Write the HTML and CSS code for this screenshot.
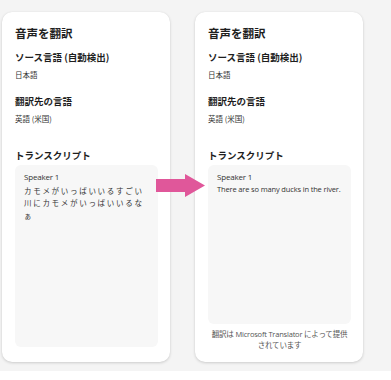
FILE: index.html
```html
<!DOCTYPE html>
<html lang="ja">
<head>
<meta charset="utf-8">
<link rel="stylesheet" href="styles.css">
</head>
<body>
<div class="stage">
  <section class="card">
    <h1 class="title">音声を翻訳</h1>
    <h2 class="label">ソース言語 (自動検出)</h2>
    <p class="value">日本語</p>
    <h2 class="label gap-md">翻訳先の言語</h2>
    <p class="value">英語 (米国)</p>
    <h2 class="label gap-lg">トランスクリプト</h2>
    <div class="box">
      <p class="speaker">Speaker 1</p>
      <p class="jp">カモメがいっぱいいるすごい川にカモメがいっぱいいるなぁ</p>
    </div>
  </section>
  <section class="card">
    <h1 class="title">音声を翻訳</h1>
    <h2 class="label">ソース言語 (自動検出)</h2>
    <p class="value">日本語</p>
    <h2 class="label gap-md">翻訳先の言語</h2>
    <p class="value">英語 (米国)</p>
    <h2 class="label gap-lg">トランスクリプト</h2>
    <div class="box">
      <p class="speaker">Speaker 1</p>
      <p class="en">There are so many ducks in the river.</p>
    </div>
    <p class="footer">翻訳は Microsoft Translator によって提供<br>されています</p>
  </section>
  <svg class="arrow" width="49" height="23" viewBox="0 0 49 23"><polygon points="0,5 29,5 29,0 49,11.5 29,23 29,18 0,18" fill="#e0579a"/></svg>
</div>
</body>
</html>
```
FILE: styles.css
```css
* { box-sizing: border-box; }
html, body { margin: 0; padding: 0; }
body {
  width: 391px;
  height: 380px;
  overflow: hidden;
  background: linear-gradient(to bottom, #f4f4f4 0, #f4f4f4 371px, #ffffff 371px);
  font-family: "Open Sans", "Noto Sans CJK JP", sans-serif;
  color: #222;
}
.stage {
  position: relative;
  display: flex;
  gap: 25px;
  padding: 12px 0 0 2px;
}
.card {
  width: 168px;
  height: 350px;
  background: #fff;
  border-radius: 10px;
  box-shadow: 0 1px 3px rgba(0,0,0,0.16), 0 0 1px rgba(0,0,0,0.08);
  padding: 13px 12px 15px 13px;
  display: flex;
  flex-direction: column;
}
.card + .card { padding-bottom: 11px; }
.title, .label, .value, .speaker, .jp, .en, .footer { margin: 0; }
.title {
  font-family: "Noto Sans CJK JP", sans-serif;
  font-size: 11.5px;
  line-height: 16px;
  font-weight: 700;
  color: #1e1e1e;
}
.label {
  font-family: "Noto Sans CJK JP", sans-serif;
  font-size: 9.5px;
  line-height: 14px;
  font-weight: 700;
  color: #1e1e1e;
  margin-top: 9px;
}
.label.gap-md { margin-top: 13px; }
.label.gap-lg { margin-top: 23px; }
.value {
  font-family: "Noto Sans CJK JP", sans-serif;
  font-size: 7.5px;
  line-height: 12px;
  color: #333;
  margin-top: 5px;
}
.box {
  flex: 1;
  margin-top: 3px;
  background: #f7f7f7;
  border-radius: 6px;
  padding: 6px 9px 8px 9px;
}
.speaker {
  font-size: 8px;
  line-height: 12px;
  color: #333;
  letter-spacing: -0.2px;
}
.jp {
  font-family: "Noto Sans CJK JP", sans-serif;
  font-size: 7.5px;
  line-height: 12.3px;
  letter-spacing: 1.7px;
  color: #333;
  margin-top: 2px;
}
.en {
  font-size: 7.5px;
  line-height: 12px;
  color: #333;
  letter-spacing: -0.15px;
}
.footer {
  font-family: "Open Sans", "Noto Sans CJK JP", sans-serif;
  font-size: 7.5px;
  line-height: 11px;
  color: #555;
  text-align: center;
  letter-spacing: -0.2px;
  margin-top: 5px;
}
.arrow {
  position: absolute;
  left: 156px;
  top: 174px;
}
```
